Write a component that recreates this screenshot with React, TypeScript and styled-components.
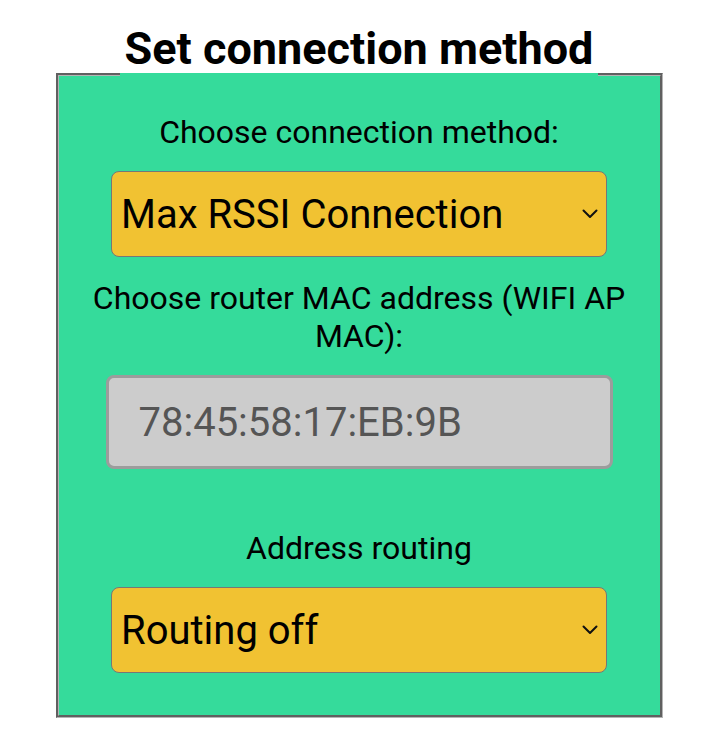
import { useState, ChangeEvent } from "react";
import styled, { createGlobalStyle } from "styled-components";

const GlobalStyle = createGlobalStyle`
    body {
        margin: 0;
        background: #ffffff;
        font-family: Roboto, "Liberation Sans", sans-serif;
        color: #000000;
    }
`

function Chevron() {
    return (
        <svg width="16" height="10" viewBox="0 0 16 10" fill="none" xmlns="http://www.w3.org/2000/svg">
            <path d="M1.5 1.5L8 8L14.5 1.5" stroke="#111111" strokeWidth="2" strokeLinecap="round" strokeLinejoin="round"/>
        </svg>
    )
}

function App() {
    const [method, setMethod] = useState("max");
    const [routing, setRouting] = useState("off");

    return (
        <>
            <GlobalStyle />
            <Page>
                <Panel>
                    <Title>Set connection method</Title>
                    <Label>Choose connection method:</Label>
                    <SelectWrap>
                        <Select value={method} onChange={(e: ChangeEvent<HTMLSelectElement>) => setMethod(e.currentTarget.value)}>
                            <option value="max">Max RSSI Connection</option>
                            <option value="mac">Fixed MAC Connection</option>
                        </Select>
                        <Arrow><Chevron /></Arrow>
                    </SelectWrap>
                    <Label>Choose router MAC address (WIFI AP MAC):</Label>
                    <MacInput value="78:45:58:17:EB:9B" disabled readOnly />
                    <Label $spaced>Address routing</Label>
                    <SelectWrap>
                        <Select value={routing} onChange={(e: ChangeEvent<HTMLSelectElement>) => setRouting(e.currentTarget.value)}>
                            <option value="off">Routing off</option>
                            <option value="on">Routing on</option>
                        </Select>
                        <Arrow><Chevron /></Arrow>
                    </SelectWrap>
                </Panel>
            </Page>
        </>
    )
}

const Page = styled.div`
    display: flex;
    justify-content: center;
    padding-top: 22px;
`

const Panel = styled.fieldset`
    box-sizing: border-box;
    width: 607px;
    margin: 0;
    padding: 38px 10px 20px;
    border: 3px groove #b4b4b4;
    background: #35db9b;

    display: flex;
    flex-direction: column;
    align-items: center;
`

// text sits above the border: extra bottom padding pushes its centre down onto the line
const Title = styled.legend`
    margin: 0 auto -51px;
    padding: 0 5px 51px;
    font-size: 45px;
    font-weight: 700;
    line-height: 53px;
`

const Label = styled.div<{ $spaced?: boolean }>`
    margin-top: ${p => p.$spaced ? "38px" : "0"};
    margin-bottom: 20px;
    font-size: 32px;
    line-height: 38px;
    text-align: center;
`

const SelectWrap = styled.div`
    position: relative;
    width: 496px;
    margin-bottom: 22px;
`

const Select = styled.select`
    box-sizing: border-box;
    width: 100%;
    height: 86px;
    padding: 0 40px 0 9px;
    appearance: none;
    border: 1.5px solid #777777;
    border-radius: 8px;
    background: #f1c232;
    color: #000000;
    font-family: Roboto, "Liberation Sans", sans-serif;
    font-size: 40px;
    outline: none;
`

const Arrow = styled.span`
    position: absolute;
    right: 9px;
    top: 38px;
    display: flex;
    pointer-events: none;
`

const MacInput = styled.input`
    box-sizing: border-box;
    width: 507px;
    height: 94px;
    margin: 0 0 22px;
    padding: 0 30px;
    border: 3px solid #9c9c9c;
    border-radius: 8px;
    background: #cccccc;
    color: #555555;
    -webkit-text-fill-color: #555555;
    opacity: 1;
    font-family: Roboto, "Liberation Sans", sans-serif;
    font-size: 40px;
`

export default App;
